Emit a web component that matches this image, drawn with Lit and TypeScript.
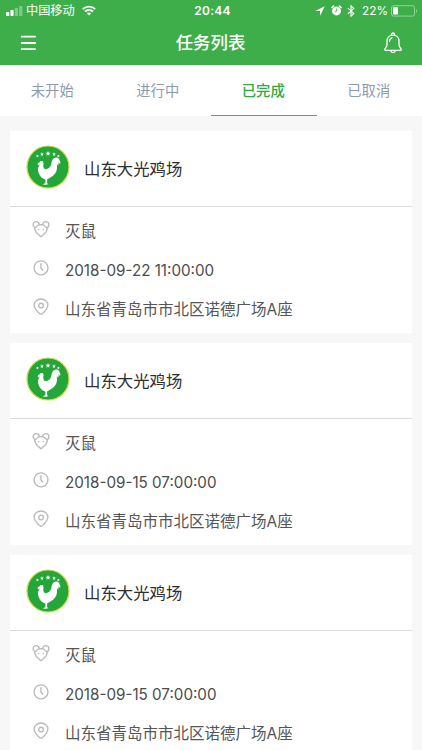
import { LitElement, html, css, svg } from "lit";
import { customElement, property, state } from "lit/decorators.js";

interface Task {
  farm: string;
  kind: string;
  time: string;
  place: string;
}

const place = "山东省青岛市市北区诺德广场A座";
const tasks: Task[] = [
  { farm: "山东大光鸡场", kind: "灭鼠", time: "2018-09-22 11:00:00", place },
  { farm: "山东大光鸡场", kind: "灭鼠", time: "2018-09-15 07:00:00", place },
  { farm: "山东大光鸡场", kind: "灭鼠", time: "2018-09-15 07:00:00", place },
];

const star = (x: number, y: number, s: number) => svg`<path
  transform="translate(${x} ${y}) scale(${s})" fill="#fff"
  d="M0-1 .27-.34 .95-.31 .42 .13 .59 .81 0 .43-.59 .81-.42 .13-.95-.31-.27-.34Z"/>`;

@customElement("status-bar")
class StatusBar extends LitElement {
  static styles = css`
    :host {
      display: grid;
      grid-template-columns: 1fr auto 1fr;
      align-items: center;
      height: 21px;
      color: #fff;
      font-size: 12.2px;
      line-height: 20px;
    }
    .left, .right { display: flex; align-items: center; }
    .left { padding-left: 6px; }
    .right { justify-content: flex-end; padding-right: 4px; }
    .time { font-weight: 600; font-size: 12px; letter-spacing: 0.3px; padding-left: 3px; }
    .carrier { margin: 0 7px 0 3px; }
    .pct { margin: 0 3px 0 7px; font-size: 11.8px; }
    svg { display: block; flex: none; }
    .clock { margin: 0 5px 0 6px; }
  `;
  render() {
    return html`
      <div class="left">
        <svg width="17" height="12" viewBox="0 0 17 12" fill="#fff">
          <rect x="0" y="7" width="3.2" height="4" rx=".7"/>
          <rect x="4.4" y="5" width="3.2" height="6" rx=".7"/>
          <rect x="8.8" y="3" width="3.2" height="8" rx=".7" opacity=".35"/>
          <rect x="13.2" y="1" width="3.2" height="10" rx=".7" opacity=".35"/>
        </svg>
        <span class="carrier">中国移动</span>
        <svg width="14" height="11" viewBox="0 0 14 11" fill="none" stroke="#fff" stroke-width="1.9">
          <path d="M.8 4.1a9 9 0 0 1 12.4 0M3.1 6.5a5.7 5.7 0 0 1 7.8 0"/>
          <path d="M7 10.6 4.9 8.5a3 3 0 0 1 4.2 0Z" fill="#fff" stroke="none"/>
        </svg>
      </div>
      <span class="time">20:44</span>
      <div class="right">
        <svg width="10" height="10" viewBox="0 0 10 10" fill="#fff"><path d="M9.7.3.2 5l4.9.1L5.2 9.8Z"/></svg>
        <svg class="clock" width="11" height="11" viewBox="0 0 11 11">
          <path d="M.9 2.5 2.5 1.1M10.1 2.5 8.5 1.1" stroke="#fff" stroke-width="1.5" stroke-linecap="round"/>
          <circle cx="5.5" cy="5.9" r="4.5" fill="#fff"/>
          <path d="M5.7 3.5v2.7H3.8" fill="none" stroke="#3eae4b" stroke-width=".9"/>
        </svg>
        <svg width="8" height="12" viewBox="0 0 8 12" fill="none" stroke="#fff" stroke-width="1.1"><path d="M.9 3.2 6.8 8.6 4 11.2V.8L6.8 3.4.9 8.8"/></svg>
        <span class="pct">22%</span>
        <svg width="27" height="12" viewBox="0 0 27 12">
          <rect x=".5" y=".7" width="23" height="10.4" rx="2" fill="none" stroke="#fff" stroke-opacity=".45"/>
          <rect x="2" y="2.2" width="5" height="7.4" rx=".6" fill="#fff"/>
          <path d="M25 4.2c1.3.5 1.3 2.9 0 3.4Z" fill="#fff" opacity=".5"/>
        </svg>
      </div>
    `;
  }
}

@customElement("nav-bar")
class NavBar extends LitElement {
  static styles = css`
    :host {
      display: grid;
      grid-template-columns: 1fr auto 1fr;
      align-items: center;
      height: 44px;
      padding: 0 19px 0 20px;
      color: #fff;
    }
    .title { font-size: 17.4px; font-weight: 500; line-height: 26px; padding: 0 2px 0 0; }
    svg { display: block; }
    .bell { justify-self: end; }
  `;
  render() {
    return html`
      <svg width="17" height="18" viewBox="0 0 17 18" stroke="#fff" stroke-width="1.8" stroke-linecap="round">
        <path d="M1.7 2.7h13.4M1.7 9h13.4M1.7 15.2h13.4"/>
      </svg>
      <span class="title">任务列表</span>
      <svg class="bell" width="20" height="22" viewBox="0 0 20 22" fill="none" stroke="#fff" stroke-width="1.3" stroke-linecap="round" stroke-linejoin="round">
        <path d="M8.5 3.2V2.5a1.5 1.5 0 0 1 3 0v.7"/>
        <path d="M10 3.2C6.3 3.2 4 5.9 4 9.2v3.6c0 2-1.4 3-2 4-.5.9-.2 1.6.8 1.6h14.4c1 0 1.3-.7.8-1.6-.6-1-2-2-2-4V9.2c0-3.3-2.3-6-6-6Z"/>
        <path d="M7.8 18.8c.2 2.4 4.2 2.4 4.4 0"/>
        <path d="M6.5 9.4c0-2 1-3.2 2.6-3.7" stroke-width="1.1"/>
      </svg>
    `;
  }
}

@customElement("task-card")
class TaskCard extends LitElement {
  @property({ attribute: false }) task!: Task;

  static styles = css`
    :host { display: block; background: #fff; }
    .head {
      display: flex;
      align-items: center;
      gap: 14px;
      box-sizing: border-box;
      height: 76px;
      padding: 0 16px 3px;
      border-bottom: 1px solid #dcdcdc;
      color: #2e2e2e;
      font-size: 16.4px;
    }
    .farm { padding-top: 2px; }
    .body { padding: 4px 0 5px; }
    .row {
      display: flex;
      align-items: center;
      height: 39px;
      padding-left: 22px;
      gap: 15px;
      color: #555;
      font-size: 15.5px;
      line-height: 24px;
      white-space: nowrap;
    }
    .row svg { margin-bottom: 3px; }
    .row span { padding-top: 2px; }
    .row .time { font-size: 15.2px; color: #4c4c4c; }
    svg { display: block; flex: none; }
  `;

  render() {
    const t = this.task;
    return html`
      <div class="head">
        <svg width="44" height="44" viewBox="0 0 44 44">
          <circle cx="22" cy="22" r="21" fill="#24a638" stroke="#d5d94b" stroke-width="1.2"/>
          ${star(11.4, 11, 1.6)}${star(15.9, 9.3, 2)}${star(22, 8.6, 2.6)}${star(28, 9.3, 2)}${star(32.4, 11, 1.6)}
          <path fill="#fff" d="M13.7 17.2c.5-1.2 1.5-1.6 2.1-.9.9-.6 1.8.1 1.4 1.1.6.5.6 1.2.1 1.7-.1 2.2.2 4.4 1.5 5 2.9.5 5.7-1.6 6.4-4.6.3-3.5 1.6-6.3 4.5-6.9 2.3-.4 3.8 1 4 3.2.9 1 .8 2.3.3 3.3-.5-.9-1-1.5-1.6-1.5.5 1.3.2 2.4-.5 3-.2-.8-.6-1.3-1.1-1.4.6 2.9.3 6.8-1.7 9.4-1.3 1.8-3.2 3.1-5.6 4.3l-2.4 1.6v3.8l1.2.7-.2.5-1.5-.3-.4 1-1-.8-2 .3v-.6l2.2-.8v-3.7c-2.6-.6-5.3-2.9-6.3-5.6-.9-2.5-1.6-4.6-1-6.1.8-1.3 1.4-2.6 1.2-3.8l-1 1.3c-.7-.4-.8-1.2-.2-1.8l-.6-.4Z"/>
        </svg>
        <span class="farm">${t.farm}</span>
      </div>
      <div class="body">
        <div class="row">
          <svg width="18" height="18" viewBox="0 0 18 18" stroke="#b9b9b9" stroke-width="1.3" stroke-linecap="round" stroke-linejoin="round">
            <g fill="#fff">
              <circle cx="4.2" cy="4.7" r="3.1"/>
              <circle cx="13.8" cy="4.7" r="3.1"/>
              <path d="M9 4.6c1.5 0 2.7.3 3.6.9.2 1.2 1.3 2 2.6 2.2.4 2.8-1.3 4.7-3 6.2-1 .9-1.6 1.4-2.2 2.1-.6.7-1.4.7-2 0-.6-.7-1.2-1.2-2.2-2.1-1.7-1.5-3.4-3.4-3-6.2 1.3-.2 2.4-1 2.6-2.2.9-.6 2.1-.9 3.6-.9Z"/>
            </g>
            <path d="M6.8 9.4v.3M11.2 9.4v.3" fill="none"/>
          </svg>
          <span>${t.kind}</span>
        </div>
        <div class="row">
          <svg width="18" height="18" viewBox="0 0 18 18" fill="none" stroke="#b9b9b9" stroke-width="1.3" stroke-linecap="round">
            <circle cx="9" cy="8.8" r="7"/><path d="M8.9 4.6v4.3l1.8 2.1"/>
          </svg>
          <span class="time">${t.time}</span>
        </div>
        <div class="row">
          <svg width="18" height="18" viewBox="0 0 18 18" fill="none" stroke="#b9b9b9" stroke-width="1.3" stroke-linejoin="round">
            <path d="M9 16.4c-.5 0-6.9-4.6-6.9-9.1a6.9 6.3 0 0 1 13.8 0c0 4.5-6.4 9.1-6.9 9.1Z"/>
            <circle cx="9" cy="7.5" r="2.3"/>
          </svg>
          <span>${t.place}</span>
        </div>
      </div>
    `;
  }
}

@customElement("app-root")
class AppRoot extends LitElement {
  @state() active = 2;

  static styles = css`
    :host {
      display: flex;
      flex-direction: column;
      height: 750px;
      overflow: hidden;
      background: #f7f7f7;
      font-family: Inter, "Noto Sans CJK SC", sans-serif;
    }
    .top { flex: none; background: #3eae4b; }
    .tabs {
      display: grid;
      grid-template-columns: repeat(4, 1fr);
      flex: none;
      height: 51px;
      background: #fff;
    }
    .tab {
      display: flex;
      align-items: center;
      justify-content: center;
      box-sizing: border-box;
      padding: 2px 1px 0 0;
      border-bottom: 1px solid transparent;
      color: #8e9ab0;
      font-size: 14.3px;
      line-height: 22px;
      cursor: pointer;
    }
    .tab.on { color: #2eab3f; font-weight: 500; border-color: #48b056; }
    .list {
      display: flex;
      flex-direction: column;
      gap: 10px;
      padding: 15px 10px 0;
    }
  `;

  render() {
    const tabs = ["未开始", "进行中", "已完成", "已取消"];
    return html`
      <div class="top"><status-bar></status-bar><nav-bar></nav-bar></div>
      <div class="tabs">
        ${tabs.map((name, i) => html`<div class="tab ${i === this.active ? "on" : ""}" @click=${() => (this.active = i)}>${name}</div>`)}
      </div>
      <div class="list">${tasks.map((t) => html`<task-card .task=${t}></task-card>`)}</div>
    `;
  }
}
